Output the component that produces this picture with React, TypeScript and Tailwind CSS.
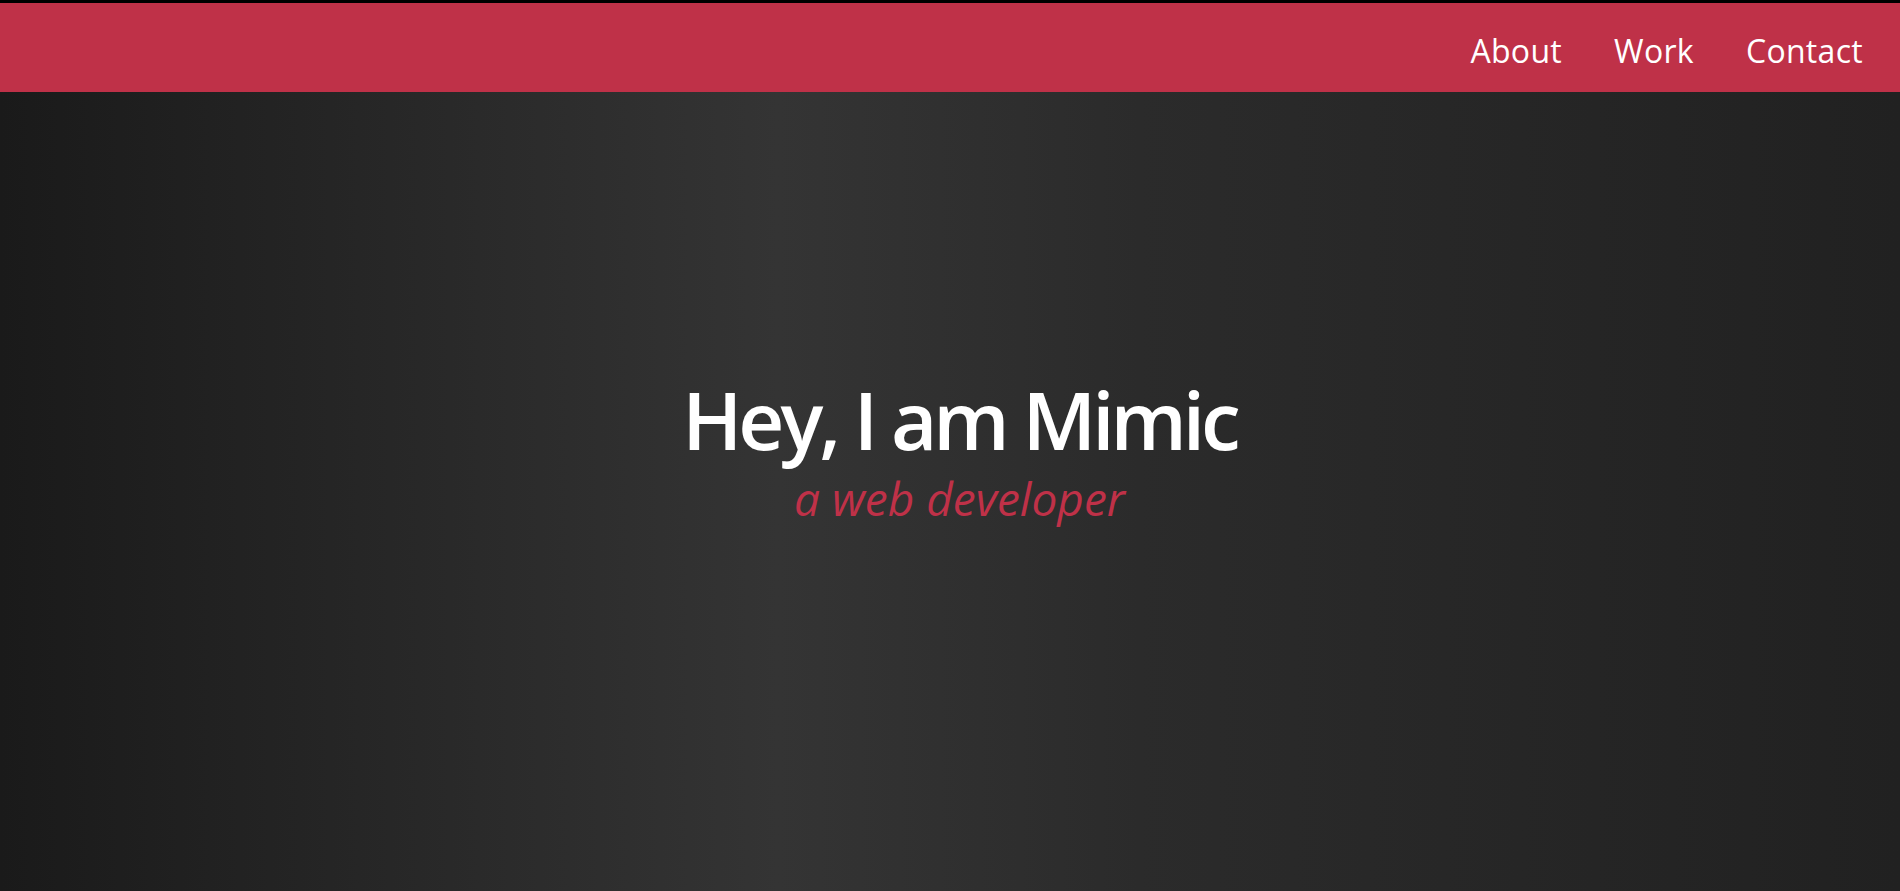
export default function App() {
  return (
    <div className="flex flex-col h-screen bg-[linear-gradient(to_right,#1a1a1a_0%,#343434_41%,#2b2b2b_60%,#212121_100%)] font-['Open_Sans',sans-serif] overflow-hidden">
      {/* Nav */}
      <nav className="flex items-center justify-end h-[92px] border-t-[3px] border-black bg-[#bf3148] pt-[6px]">
        <ul className="flex gap-[52px] pr-[37px] text-[32px] text-white tracking-[0.3px]">
          <li><a href="#about">About</a></li>
          <li><a href="#work">Work</a></li>
          <li><a href="#contact">Contact</a></li>
        </ul>
      </nav>

      {/* Hero */}
      <section className="flex flex-1 flex-col items-center justify-center pb-[86px] pl-[19px] text-center">
        <h1 className="text-[80px] leading-[1.2] font-semibold tracking-[-4px] text-white">Hey, I am Mimic</h1>
        <p className="mt-[4px] text-[46px] leading-[1.2] italic text-[#bf3148]">a web developer</p>
      </section>
    </div>
  )
}
